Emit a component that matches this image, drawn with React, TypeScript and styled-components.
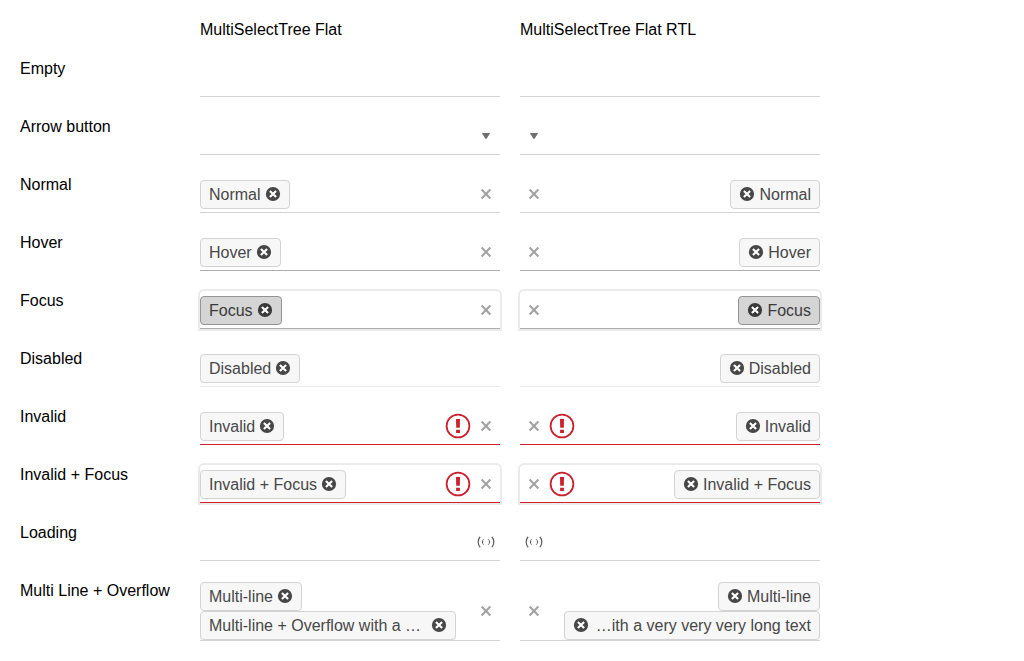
import React from 'react';
import styled, { createGlobalStyle, css } from 'styled-components';

const GlobalStyle = createGlobalStyle`
  * { box-sizing: border-box; }
  body {
    margin: 0;
    background: #fff;
    color: #000;
    font: 16px/18px "Liberation Sans", Arial, sans-serif;
  }
`;

type Status = 'default' | 'hover' | 'focus' | 'disabled' | 'invalid' | 'invalidFocus';

const lineColor: Record<Status, string> = {
  default: '#d3d3d3',
  hover: '#adadad',
  focus: '#adadad',
  disabled: '#ebebeb',
  invalid: '#cd202c',
  invalidFocus: '#cd202c',
};

const Page = styled.main`
  display: grid;
  grid-template-columns: 160px 300px 300px;
  gap: 20px;
  padding: 20px;
`;

const Heading = styled.div`
  height: 19px;
  line-height: 19px;
`;

const Label = styled.div`
  line-height: 19px;
  white-space: nowrap;
`;

const Field = styled.div<{ $status: Status; $rtl: boolean; $multi: boolean }>`
  display: flex;
  flex-direction: ${p => (p.$rtl ? 'row-reverse' : 'row')};
  height: ${p => (p.$multi ? 60 : 38)}px;
  border-bottom: 1px solid ${p => lineColor[p.$status]};
  ${p =>
    (p.$status === 'focus' || p.$status === 'invalidFocus') &&
    css`
      border-radius: 4px 4px 0 0;
      box-shadow: 0 0 0 2px #ebebeb;
    `}
`;

const Chips = styled.div<{ $rtl: boolean; $multi: boolean }>`
  flex: 1;
  min-width: 0;
  display: flex;
  flex-direction: column;
  align-items: ${p => (p.$rtl ? 'flex-end' : 'flex-start')};
  padding-top: ${p => (p.$multi ? 1 : 5)}px;
`;

const Chip = styled.span<{ $rtl: boolean; $active: boolean; $full: boolean }>`
  display: flex;
  flex-direction: ${p => (p.$rtl ? 'row-reverse' : 'row')};
  align-items: center;
  justify-content: space-between;
  gap: 4px;
  flex: none;
  width: ${p => (p.$full ? '256px' : 'auto')};
  height: 29px;
  padding: 0 8px;
  border: 1px solid ${p => (p.$active ? '#949494' : '#d3d3d3')};
  border-radius: 4px;
  background: ${p => (p.$active ? '#d5d5d5' : '#f7f7f7')};
  color: ${p => (p.$active ? '#3a3a3a' : '#474747')};
  white-space: nowrap;
`;

const Icons = styled.div<{ $rtl: boolean }>`
  display: flex;
  flex-direction: ${p => (p.$rtl ? 'row-reverse' : 'row')};
  align-items: center;
  flex: none;
  height: 100%;
  padding-top: 1px;
`;

const IconCell = styled.span`
  display: flex;
  align-items: center;
  justify-content: center;
  width: 28px;
  height: 28px;
`;

const Svg = styled.svg`
  display: block;
  flex: none;
`;

const RemoveIcon = () => (
  <Svg width="16" height="17" viewBox="0 0 16 17">
    <circle cx="8" cy="8" r="7.1" fill="currentColor" />
    <path d="M4.9 4.9l6.2 6.2M11.1 4.9l-6.2 6.2" stroke="#fff" strokeWidth="2.1" />
  </Svg>
);

const ClearIcon = () => (
  <Svg width="16" height="16" viewBox="0 0 16 16">
    <path d="M3.6 3.6l8.8 8.8M12.4 3.6l-8.8 8.8" stroke="#a3a3a3" strokeWidth="2.1" />
  </Svg>
);

const ArrowIcon = () => (
  <Svg width="16" height="16" viewBox="0 0 16 16">
    <path d="M3.8 5h8.4L8.6 10.8h-1.2z" fill="#6f6f6f" />
  </Svg>
);

const InvalidIcon = () => (
  <Svg width="26" height="26" viewBox="0 0 26 26">
    <circle cx="13" cy="13" r="11.4" fill="none" stroke="#cd202c" strokeWidth="1.8" />
    <path d="M11 6h4l-.2 8.8h-3.6zM11.1 16.8h3.8v3.2h-3.8z" fill="#cd202c" />
  </Svg>
);

const LoadingIcon = () => (
  <Svg width="18" height="16" viewBox="0 0 18 16" fill="none" stroke="#5a5a5a">
    <path d="M3.2 2.8C.5 5.4.5 10.6 3.2 13.2M14.8 2.8c2.7 2.6 2.7 7.8 0 10.4" strokeWidth="1.2" />
    <path d="M6.5 5.3c-1.4 1.5-1.4 3.9 0 5.4M11.5 5.3c1.4 1.5 1.4 3.9 0 5.4" strokeWidth="1" />
  </Svg>
);

const icons = {
  arrow: ArrowIcon,
  clear: ClearIcon,
  invalid: InvalidIcon,
  loading: LoadingIcon,
};

interface Row {
  label: string;
  status?: Status;
  chips?: string[];
  rtlChips?: string[];
  icons?: (keyof typeof icons)[];
}

const rows: Row[] = [
  { label: 'Empty' },
  { label: 'Arrow button', icons: ['arrow'] },
  { label: 'Normal', chips: ['Normal'], icons: ['clear'] },
  { label: 'Hover', status: 'hover', chips: ['Hover'], icons: ['clear'] },
  { label: 'Focus', status: 'focus', chips: ['Focus'], icons: ['clear'] },
  { label: 'Disabled', status: 'disabled', chips: ['Disabled'] },
  { label: 'Invalid', status: 'invalid', chips: ['Invalid'], icons: ['invalid', 'clear'] },
  { label: 'Invalid + Focus', status: 'invalidFocus', chips: ['Invalid + Focus'], icons: ['invalid', 'clear'] },
  { label: 'Loading', icons: ['loading'] },
  {
    label: 'Multi Line + Overflow',
    chips: ['Multi-line', 'Multi-line + Overflow with a …'],
    rtlChips: ['Multi-line', '…ith a very very very long text'],
    icons: ['clear'],
  },
];

function MultiSelect({ row, rtl = false }: { row: Row; rtl?: boolean }) {
  const status = row.status ?? 'default';
  const chips = (rtl && row.rtlChips) || row.chips || [];
  const multi = chips.length > 1;
  return (
    <Field $status={status} $rtl={rtl} $multi={multi}>
      <Chips $rtl={rtl} $multi={multi}>
        {chips.map((text, i) => (
          <Chip key={text} $rtl={rtl} $active={status === 'focus'} $full={i > 0}>
            <span>{text}</span>
            <RemoveIcon />
          </Chip>
        ))}
      </Chips>
      <Icons $rtl={rtl}>
        {row.icons?.map(name => {
          const Icon = icons[name];
          return (
            <IconCell key={name}>
              <Icon />
            </IconCell>
          );
        })}
      </Icons>
    </Field>
  );
}

export default function App() {
  return (
    <>
      <GlobalStyle />
      <Page>
        <span />
        <Heading>MultiSelectTree Flat</Heading>
        <Heading>MultiSelectTree Flat RTL</Heading>
        {rows.map(row => (
          <React.Fragment key={row.label}>
            <Label>{row.label}</Label>
            <MultiSelect row={row} />
            <MultiSelect row={row} rtl />
          </React.Fragment>
        ))}
      </Page>
    </>
  );
}
